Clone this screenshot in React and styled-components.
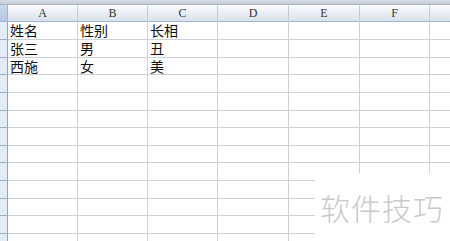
import React from "react";
import styled, { createGlobalStyle } from "styled-components";

const GlobalStyle = createGlobalStyle`
  html, body {
    margin: 0;
    padding: 0;
    background: #ffffff;
    overflow: hidden;
  }
  body {
    font-family: "Noto Sans CJK SC", "Noto Sans", sans-serif;
  }
`;

const colWidths = [70, 70, 70, 71, 71, 70, 40];
const colNames = ["A", "B", "C", "D", "E", "F", ""];
const rowHeights = [18, 18, 17, 18, 18, 17, 18, 17, 18, 18, 17, 18, 18];

const data = [
  ["姓名", "性别", "长相"],
  ["张三", "男", "丑"],
  ["西施", "女", "美"],
];

const Sheet = styled.div`
  position: relative;
  width: 450px;
  height: 241px;
  overflow: hidden;
  background: #fff;
`;

const TopStrip = styled.div`
  height: 5px;
  background: linear-gradient(#d6dce4, #c3cbd6);
  border-bottom: 1px solid #aab4c2;
  box-sizing: border-box;
`;

const Grid = styled.div`
  display: grid;
  grid-template-columns: 8px ${colWidths.map((w) => w + "px").join(" ")};
  grid-template-rows: 17px ${rowHeights.map((h) => h + "px").join(" ")};
`;

const Corner = styled.div`
  background: linear-gradient(#c9d7ea, #b5c8e2);
  border-right: 1px solid #9eb6ce;
  border-bottom: 1px solid #9eb6ce;
  box-sizing: border-box;
`;

const ColHead = styled.div`
  box-sizing: border-box;
  background: linear-gradient(#fbfcfe, #e6ebf2 60%, #dbe2ec);
  border-right: 1px solid #c5ccd6;
  border-bottom: 1px solid #9eb6ce;
  text-align: center;
  font-family: "Liberation Serif", serif;
  font-size: 12px;
  line-height: 16px;
  color: #2e3540;
`;

const RowHead = styled.div`
  box-sizing: border-box;
  background: #e4ecf7;
  border-right: 1px solid #8ea6c0;
  border-bottom: 1px solid #9aaec6;
`;

const Cell = styled.div`
  box-sizing: border-box;
  border-right: 1px solid #cdd2d9;
  border-bottom: 1px solid #cdd2d9;
  padding-left: 2px;
  font-size: 14px;
  line-height: 17px;
  color: #111;
  white-space: nowrap;
  overflow: visible;
`;

const Watermark = styled.div`
  position: absolute;
  left: 315px;
  top: 173px;
  right: 0;
  bottom: 0;
  background: #fff;
  display: flex;
  align-items: center;
  padding-left: 5px;
  font-family: "Noto Sans CJK SC", sans-serif;
  font-weight: 300;
  font-size: 30px;
  letter-spacing: 1px;
  color: #cacaca;
`;

export default function App() {
  return (
    <>
      <GlobalStyle />
      <Sheet>
        <TopStrip />
        <Grid>
          <Corner />
          {colNames.map((c, i) => (
            <ColHead key={i}>{c}</ColHead>
          ))}
          {rowHeights.map((_, r) => (
            <React.Fragment key={r}>
              <RowHead />
              {colNames.map((_, c) => (
                <Cell key={c}>{data[r] && data[r][c] ? data[r][c] : ""}</Cell>
              ))}
            </React.Fragment>
          ))}
        </Grid>
        <Watermark>软件技巧</Watermark>
      </Sheet>
    </>
  );
}
